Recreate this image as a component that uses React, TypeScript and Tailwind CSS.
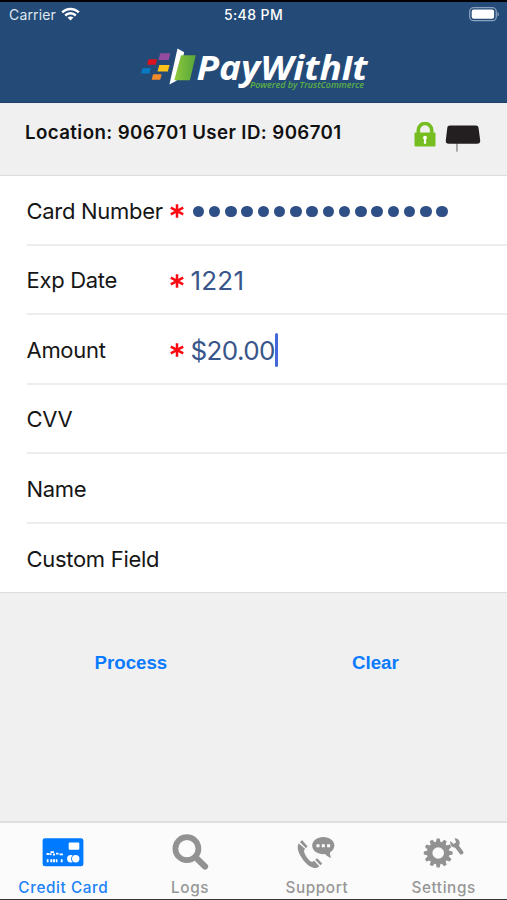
import type { ReactNode } from 'react';

type Field = {
  label: string;
  required?: boolean;
  value?: ReactNode;
};

const CARD_DIGITS = 16;
const GEAR_TEETH = 12;

function WifiIcon() {
  return (
    <svg width="19" height="14" viewBox="0 0 19 14" fill="none" stroke="#fff" strokeWidth="2.5">
      <path d="M1.2 5.4C5.8 0.7 13.2 0.7 17.8 5.4" />
      <path d="M4.2 8.5C7.2 5.6 11.8 5.6 14.8 8.5" />
      <path d="M9.5 13.4L6.6 10.5C8.2 9.1 10.8 9.1 12.4 10.5Z" fill="#fff" stroke="none" />
    </svg>
  );
}

function BatteryIcon() {
  return (
    <svg width="31" height="15" viewBox="0 0 31 15">
      <rect x="0.7" y="0.7" width="26.6" height="13" rx="4" fill="none" stroke="#8ba1bd" strokeWidth="1.3" />
      <rect x="2.7" y="2.6" width="22.4" height="9.2" rx="2" fill="#fff" />
      <path d="M28.5 5v4.6c1.9-.8 1.9-3.8 0-4.6Z" fill="#8ba1bd" />
    </svg>
  );
}

function Logo() {
  return (
    <svg width="232" height="46" viewBox="0 0 232 46" className="overflow-visible">
      <defs>
        <linearGradient id="door" x1="0" y1="0" x2="1" y2="0">
          <stop offset="0" stopColor="#8fc93a" />
          <stop offset="1" stopColor="#55a53b" />
        </linearGradient>
      </defs>
      <path d="M19.2 5.3h10.2l-1.8 6.8H17.5Z" fill="#944ba0" />
      <path d="M7.5 11.2h8.7l-1.6 5.6H6Z" fill="#d9131f" />
      <path d="M18.3 17h10.3l-1.8 6.5H16.5Z" fill="#fbc21a" />
      <path d="M1.5 20.2h8.3l-1.5 5.3H0Z" fill="#0879c4" />
      <path d="M12.1 26.3h8.6l-1.5 5.4h-8.6Z" fill="#f58a2a" />
      <path d="M36.5.6L43.2 4.2 42.5 7.3 35.5 32.7 28.4 36.5Z" fill="#fff" />
      <path d="M40 7.3H54.8L48.9 32.2H33.3Z" fill="url(#door)" />
      <text
        x="109"
        y="39.8"
        fill="#5cb043"
        fontFamily="Open Sans, sans-serif"
        fontSize="8"
        fontWeight="600"
        fontStyle="italic"
        textLength="114"
        lengthAdjust="spacingAndGlyphs"
      >
        Powered by TrustCommerce
      </text>
      <text
        x="55.5"
        y="32.2"
        fill="#fff"
        fontFamily="Open Sans, sans-serif"
        fontSize="34"
        fontWeight="700"
        fontStyle="italic"
        textLength="171"
        lengthAdjust="spacingAndGlyphs"
      >
        PayWith
        <tspan fontFamily="Liberation Sans, sans-serif" fontSize="35">I</tspan>t
      </text>
    </svg>
  );
}

function LockIcon() {
  return (
    <svg width="22" height="25" viewBox="0 0 22 25">
      <path d="M4.3 12V8.2a6.7 6.7 0 0 1 13.4 0V12" fill="none" stroke="#76bd22" strokeWidth="3.6" />
      <rect x="0.5" y="10.4" width="21" height="14" rx="0.8" fill="#76bd22" />
      <circle cx="11" cy="15.7" r="2" fill="#fff" />
      <path d="M10.1 16h1.8l.3 5.7H9.8Z" fill="#fff" />
    </svg>
  );
}

function CardReaderIcon() {
  return (
    <svg width="36" height="28" viewBox="0 0 36 28">
      <rect x="11" y="17" width="1.9" height="9.6" fill="#a3a3a3" />
      <path
        d="M5 0.5H30.8C32.4 .5 33.2 1.2 33.5 2.8L35.2 15.2C35.4 17.6 34.3 18.8 32 18.8H4C1.6 18.8 .5 17.6 .8 15.2L2.3 2.8C2.5 1.2 3.4 .5 5 .5Z"
        fill="#231f20"
      />
    </svg>
  );
}

function CreditCardIcon() {
  return (
    <svg width="42" height="36" viewBox="0 0 42 36">
      <rect x="0.6" y="4.3" width="40.8" height="28" rx="2.4" fill="#007aff" />
      <rect x="26.7" y="8.4" width="10.6" height="7.4" rx="1" fill="#fff" />
      <circle cx="28.8" cy="24.7" r="3.7" fill="#fff" />
      <circle cx="33.7" cy="24.7" r="4.6" fill="#007aff" />
      <circle cx="33.7" cy="24.7" r="3.7" fill="#fff" />
      <path d="M4.5 20h3M8.5 18.2h3.5M8 20.6l1.5-.9M11 20.5h2M14 19.7h2.5M17.5 20.3h3.5" stroke="#fff" strokeWidth="1.8" />
      <path d="M4.8 26.8h1.7M8.3 26.8h2M11 26.8h2M13.8 26.8h1.6M18.8 26.8h1.8" stroke="#fff" strokeWidth="3" />
    </svg>
  );
}

function SearchIcon() {
  return (
    <svg width="42" height="36" viewBox="0 0 42 36" fill="none" stroke="#929292">
      <circle cx="17.9" cy="14.7" r="11.5" strokeWidth="5.7" />
      <path d="M26.8 23.6L36 32.5" strokeWidth="6.2" strokeLinecap="round" />
    </svg>
  );
}

function SupportIcon() {
  return (
    <svg width="42" height="36" viewBox="0 0 42 36" fill="#929292">
      <path d="M2.8 9.5C1.1 11.5 1.2 16 4.3 21.5C8.2 28.6 14.2 34 19.2 34C20.8 34 22.3 33.2 23.3 32.2L18.2 26.7C16.6 28.2 15.3 28.2 13.5 26.5C11 24 9 20.8 8.2 18.2C7.8 16.6 8.2 15.9 9.3 15.1Z" />
      <path d="M4 8.2L6 6.1L11.5 12.3L10 14.3Z" />
      <path d="M19.2 25.8L21.2 24.2L26.2 29.6L24.4 31.2Z" />
      <path d="M27.3 3C33.6 3 38.4 6.7 38.4 11.5C38.4 14.4 36.7 16.9 34 18.4C33.9 20.3 34.4 22 35.2 24C32.5 23.2 30.4 21.7 29.1 20.1C22 20.7 16.2 16.8 16.2 11.5C16.2 6.7 21 3 27.3 3Z" />
      <path d="M20.5 10.3h3v3h-3ZM25.8 10.3h3v3h-3ZM31.1 10.3h3v3h-3Z" fill="#fff" />
    </svg>
  );
}

function SettingsIcon() {
  return (
    <svg width="42" height="36" viewBox="0 0 42 36" fill="#929292">
      <circle cx="15.2" cy="19" r="8.5" fill="none" stroke="#929292" strokeWidth="5.4" />
      {Array.from({ length: GEAR_TEETH }, (_, i) => (
        <path
          key={i}
          d="M12.7 9L13.7 4.6H16.7L17.7 9Z"
          transform={`rotate(${(i * 360) / GEAR_TEETH} 15.2 19)`}
        />
      ))}
      <path d="M33.7 12.2L38.4 18.4" stroke="#929292" strokeWidth="4.2" strokeLinecap="round" />
      <path d="M31.5 4.2L33.1 8.2L30.7 9.9L27.4 7.1C26.7 9.9 28.2 13 31.3 13.6C34.9 14.3 37.5 11.2 36.5 7.6C35.7 5.1 33.8 4.1 31.5 4.2Z" />
    </svg>
  );
}

const fields: Field[] = [
  {
    label: 'Card Number',
    required: true,
    value: (
      <div className="flex gap-[4.77px] pl-[2px]">
        {Array.from({ length: CARD_DIGITS }, (_, i) => (
          <span key={i} className="size-[11.5px] rounded-full bg-[#2f4f87]" />
        ))}
      </div>
    ),
  },
  { label: 'Exp Date', required: true, value: <span className="tracking-[0.2px]">1221</span> },
  {
    label: 'Amount',
    required: true,
    value: (
      <>
        <span className="tracking-[-0.6px]">$20.00</span>
        <span className="h-[34px] w-[3px] rounded-full bg-[#4468dc]" />
      </>
    ),
  },
  { label: 'CVV' },
  { label: 'Name' },
  { label: 'Custom Field' },
];

const tabs = [
  { label: 'Credit Card', icon: <CreditCardIcon />, active: true },
  { label: 'Logs', icon: <SearchIcon /> },
  { label: 'Support', icon: <SupportIcon /> },
  { label: 'Settings', icon: <SettingsIcon /> },
];

function Asterisk() {
  return (
    <svg width="14" height="14" viewBox="0 0 14 14" stroke="#fb0a12" strokeWidth="2.5">
      <path d="M7 0.2V13.8M0.8 3.6L13.2 10.4M13.2 3.6L0.8 10.4" />
    </svg>
  );
}

function FieldRow({ label, required, value }: Field) {
  return (
    <div className="flex h-[69.5px] items-center border-b-2 border-[#ededed] pt-[3px] text-[22px] text-[#161616] last:border-b-0 last:pt-[2px]">
      <span className="w-[143.5px] shrink-0 tracking-[-0.3px] whitespace-nowrap">{label}</span>
      {required && <Asterisk />}
      <div className="ml-[6.5px] flex items-center text-[26px] text-[#38568a]">{value}</div>
    </div>
  );
}

export default function App() {
  return (
    <div className="flex h-[900px] w-[507px] flex-col overflow-hidden border-t-2 border-b border-t-black border-b-[#333] bg-[#f0f0f0] font-['Inter',sans-serif]">
      <header className="h-[101px] shrink-0 border-b border-[#1d4268] bg-[#244b77] text-white">
        <div className="grid h-6 grid-cols-3 items-center pr-[7px] pl-[9px] text-[14px]">
          <div className="flex items-center gap-[5px]">
            <span className="tracking-[0.15px] text-[#dfe7f0]">Carrier</span>
            <WifiIcon />
          </div>
          <span className="pr-[2px] text-center font-medium tracking-[0.4px]">5:48 PM</span>
          <div className="flex justify-end">
            <BatteryIcon />
          </div>
        </div>
        <div className="mt-[22px] pl-[141px]">
          <Logo />
        </div>
      </header>

      <div className="flex h-[72px] shrink-0 items-start pl-[25px] text-[18.7px] font-semibold text-[#111]">
        <span className="mt-[16px] w-[389px] leading-[28px] tracking-[0.4px]">Location: 906701 User ID: 906701</span>
        <div className="mt-[19px]">
          <LockIcon />
        </div>
        <div className="mt-[22px] ml-[9px]">
          <CardReaderIcon />
        </div>
      </div>

      <main className="h-[418px] shrink-0 border-y border-[#dcdcdc] bg-white pl-[26.5px]">
        {fields.map((field) => (
          <FieldRow key={field.label} {...field} />
        ))}
      </main>

      <div className="flex pt-[56px] font-['Liberation_Sans',sans-serif] text-[18.7px] font-bold text-[#0a7aff]">
        <button className="ml-[94.5px] w-[257.5px] text-left">Process</button>
        <button>Clear</button>
      </div>

      <nav className="mt-auto grid h-[78px] shrink-0 grid-cols-4 border-t-2 border-[#dfdfdf] bg-[#fbfbfb]">
        {tabs.map((tab) => (
          <div
            key={tab.label}
            className={`flex flex-col items-center pt-[11px] text-[15.3px] font-medium ${tab.active ? 'text-[#1b82f8]' : 'text-[#979797]'}`}
          >
            {tab.icon}
            <span className="mt-[7px] leading-[22px] tracking-[0.6px]">{tab.label}</span>
          </div>
        ))}
      </nav>
    </div>
  );
}
